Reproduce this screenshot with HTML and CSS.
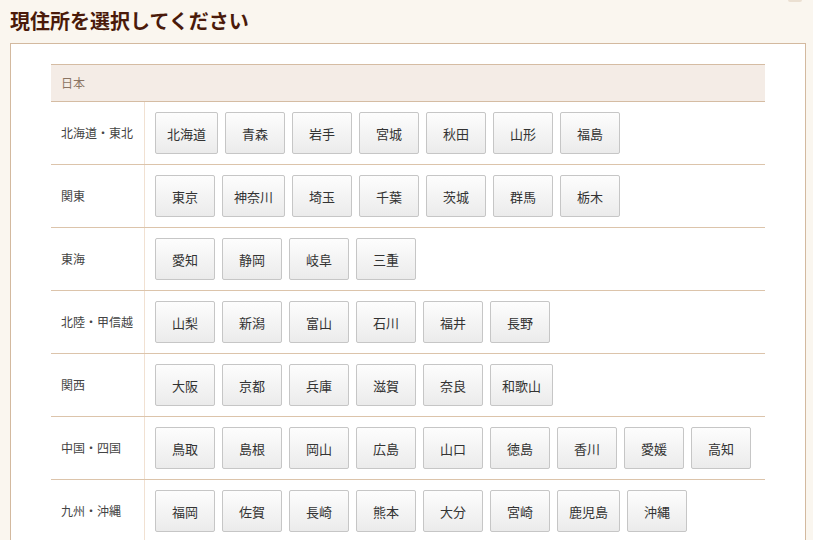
FILE: index.html
```html
<!DOCTYPE html>
<html>
<head>
  <meta charset="UTF-8">
  <title>現住所を選択してください</title>
  <link rel="stylesheet" href="styles.css">
</head>
<body>
  <div class="topTab"></div>
  <h1 class="title">現住所を選択してください</h1>

  <div class="panel">
    <table class="areaTable">
      <tr class="head">
        <th colspan="2">日本</th>
      </tr>
      <tr>
        <td class="region">北海道・東北</td>
        <td class="prefs"><div class="btns">
          <button>北海道</button><button>青森</button><button>岩手</button><button>宮城</button><button>秋田</button><button>山形</button><button>福島</button>
        </div></td>
      </tr>
      <tr>
        <td class="region">関東</td>
        <td class="prefs"><div class="btns">
          <button>東京</button><button>神奈川</button><button>埼玉</button><button>千葉</button><button>茨城</button><button>群馬</button><button>栃木</button>
        </div></td>
      </tr>
      <tr>
        <td class="region">東海</td>
        <td class="prefs"><div class="btns">
          <button>愛知</button><button>静岡</button><button>岐阜</button><button>三重</button>
        </div></td>
      </tr>
      <tr>
        <td class="region">北陸・甲信越</td>
        <td class="prefs"><div class="btns">
          <button>山梨</button><button>新潟</button><button>富山</button><button>石川</button><button>福井</button><button>長野</button>
        </div></td>
      </tr>
      <tr>
        <td class="region">関西</td>
        <td class="prefs"><div class="btns">
          <button>大阪</button><button>京都</button><button>兵庫</button><button>滋賀</button><button>奈良</button><button>和歌山</button>
        </div></td>
      </tr>
      <tr>
        <td class="region">中国・四国</td>
        <td class="prefs"><div class="btns">
          <button>鳥取</button><button>島根</button><button>岡山</button><button>広島</button><button>山口</button><button>徳島</button><button>香川</button><button>愛媛</button><button>高知</button>
        </div></td>
      </tr>
      <tr>
        <td class="region">九州・沖縄</td>
        <td class="prefs"><div class="btns">
          <button>福岡</button><button>佐賀</button><button>長崎</button><button>熊本</button><button>大分</button><button>宮崎</button><button>鹿児島</button><button>沖縄</button>
        </div></td>
      </tr>
    </table>
  </div>
</body>
</html>
```

FILE: styles.css
```css
html, body {
  margin:0; padding:0;
  height:100%;
  overflow:hidden;
  background:#faf6ef;
  font-family:"Noto Sans CJK JP", "Noto Sans", sans-serif;
  color:#333;
}
body {
  position:relative;
  padding-top:8px;
  box-sizing:border-box;
}
.topTab {
  position:absolute;
  top:0; left:788px;
  width:14px; height:2px;
  background:#ebe0d2;
  border-radius:0 0 3px 3px;
}
.title {
  margin:0 0 9px 10px;
  font-size:20px;
  line-height:26px;
  font-weight:bold;
  color:#4a1a0a;
}
.panel {
  margin-left:10px;
  width:796px;
  box-sizing:border-box;
  border:1px solid #d3b99f;
  border-bottom:none;
  background:#fff;
  padding:20px 40px 0 40px;
  height:600px;
}
.areaTable {
  width:714px;
  border-collapse:collapse;
}
.areaTable th {
  text-align:left;
  font-weight:normal;
  font-size:12px;
  line-height:16px;
  color:#8b7462;
  background:#f4ece6;
  height:36px;
  padding:0 10px;
  border-top:1px solid #d5bca3;
  border-bottom:1px solid #d5bca3;
}
.areaTable td {
  border-bottom:1px solid #dcc4ab;
}
.region {
  width:83px;
  padding:0 0 0 10px;
  font-size:12px;
  line-height:16px;
  color:#444;
  border-right:1px solid #f1e1d2;
  white-space:nowrap;
}
.prefs {
  padding:10px 0 10px 10px;
}
.btns {
  display:flex;
  gap:7px;
}
.btns button {
  min-width:60px;
  height:42px;
  padding:0 11px;
  box-sizing:border-box;
  border:1px solid #c6c6c6;
  border-radius:2px;
  background:linear-gradient(#fdfdfd, #ebebeb);
  font-family:"Noto Sans CJK JP", "Noto Sans", sans-serif;
  font-size:13px;
  color:#333;
  cursor:pointer;
}
```
